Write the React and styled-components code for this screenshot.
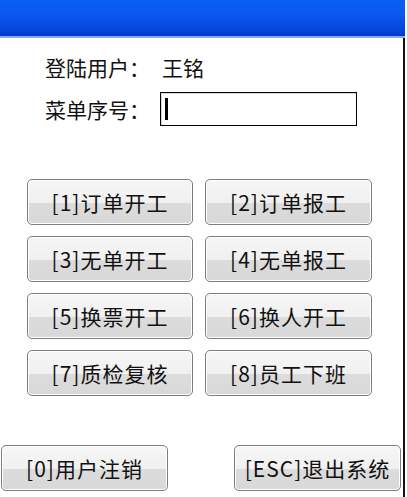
import React from "react";
import styled, { createGlobalStyle } from "styled-components";

const menuItems = [
  { key: "1", label: "订单开工" },
  { key: "2", label: "订单报工" },
  { key: "3", label: "无单开工" },
  { key: "4", label: "无单报工" },
  { key: "5", label: "换票开工" },
  { key: "6", label: "换人开工" },
  { key: "7", label: "质检复核" },
  { key: "8", label: "员工下班" },
];

const App = () => {
  return (
    <>
      <GlobalStyle />
      <Window>
        <TitleBar />
        <Body>
          <InfoRow>
            <Label>登陆用户：</Label>
            <Value>王铭</Value>
          </InfoRow>
          <InfoRow>
            <Label>菜单序号：</Label>
            <InputBox>
              <Caret />
            </InputBox>
          </InfoRow>

          <MenuGrid>
            {menuItems.map((item) => (
              <MenuButton key={item.key}>
                [{item.key}]{item.label}
              </MenuButton>
            ))}
          </MenuGrid>

          <BottomRow>
            <MenuButton>[0]用户注销</MenuButton>
            <MenuButton>[ESC]退出系统</MenuButton>
          </BottomRow>
        </Body>
      </Window>
    </>
  );
};

export default App;

const GlobalStyle = createGlobalStyle`
  html, body {
    margin: 0;
    padding: 0;
    background: #ffffff;
  }
  body {
    font-family: "Noto Sans CJK SC", "Noto Sans", sans-serif;
    color: #000;
  }
`;

const Window = styled.div`
  width: 405px;
  height: 497px;
  display: flex;
  flex-direction: column;
  background: #fff;
`;

const TitleBar = styled.div`
  height: 36px;
  flex-shrink: 0;
  background: linear-gradient(
    to bottom,
    #0b5ff2 0%,
    #0a58ee 40%,
    #0647dd 80%,
    #0338c8 100%
  );
  border-bottom: 2px solid #8aa8ec;
`;

const Body = styled.div`
  flex: 1;
  display: flex;
  flex-direction: column;
  padding: 14px 0 6px 0;
  border-right: 2px solid #111;
`;

const InfoRow = styled.div`
  display: flex;
  align-items: center;
  padding-left: 45px;
  min-height: 30px;
  & + & {
    margin-top: 10px;
  }
`;

const Label = styled.span`
  font-size: 21px;
  line-height: 30px;
  width: 115px;
  white-space: nowrap;
  color: #111;
`;

const Value = styled.span`
  font-size: 21px;
  line-height: 30px;
  margin-left: 2px;
  color: #111;
`;

const InputBox = styled.div`
  width: 191px;
  height: 32px;
  border: 1px solid #000;
  box-shadow: inset 1px 1px 0 #d8d8d8;
  display: flex;
  align-items: center;
  padding-left: 4px;
  box-sizing: content-box;
`;

const Caret = styled.div`
  width: 3px;
  height: 22px;
  background: #000;
`;

const MenuGrid = styled.div`
  display: grid;
  grid-template-columns: 166px 167px;
  grid-auto-rows: 46px;
  column-gap: 12px;
  row-gap: 11px;
  margin: 53px 0 0 27px;
`;

const MenuButton = styled.button`
  font-family: "Noto Sans CJK SC", "Noto Sans", sans-serif;
  font-size: 21px;
  letter-spacing: 1px;
  color: #111;
  height: 46px;
  padding: 0;
  border: 1.5px solid #7d7d7d;
  border-radius: 5px;
  background: linear-gradient(
    to bottom,
    #f6f6f6 0%,
    #f0f0f0 52%,
    #dcdcdc 53%,
    #d8d8d8 100%
  );
  box-shadow: inset 0 0 0 1px #ffffff;
  display: flex;
  align-items: center;
  justify-content: center;
  white-space: nowrap;
  cursor: pointer;
`;

const BottomRow = styled.div`
  margin-top: auto;
  display: flex;
  justify-content: space-between;
  padding: 0 2px 0 1px;

  & > ${MenuButton} {
    width: 167px;
  }
`;
